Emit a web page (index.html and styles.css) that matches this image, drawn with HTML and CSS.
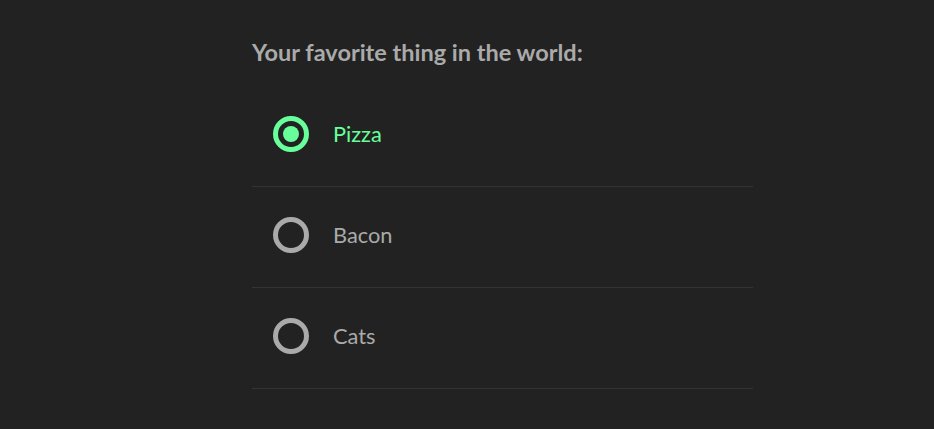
FILE: index.html
```html
<!DOCTYPE html>
<html lang="en">
<head>
<meta charset="utf-8">
<title>Favorite thing</title>
<link rel="stylesheet" href="styles.css">
</head>
<body>
<main class="page">
  <form class="poll">
    <h2 class="poll-title">Your favorite thing in the world:</h2>
    <ul class="options">
      <li class="option is-checked">
        <span class="radio"><span class="dot"></span></span>
        <span class="label">Pizza</span>
      </li>
      <li class="option">
        <span class="radio"></span>
        <span class="label">Bacon</span>
      </li>
      <li class="option">
        <span class="radio"></span>
        <span class="label">Cats</span>
      </li>
    </ul>
  </form>
</main>
</body>
</html>
```

FILE: styles.css
```css
html, body {
  margin: 0;
  padding: 0;
  background: #222222;
  height: 100%;
}

body {
  font-family: Lato, "Liberation Sans", sans-serif;
  color: #aaaaaa;
}

.page {
  padding: 36px 0 0 252px;
}

.poll {
  width: 501px;
}

.poll-title {
  margin: 0 0 18px 0;
  font-size: 23.5px;
  font-weight: 700;
  line-height: 32px;
  color: #aaaaaa;
}

.options {
  list-style: none;
  margin: 0;
  padding: 0;
}

.option {
  display: flex;
  align-items: center;
  gap: 24px;
  padding: 30px 0 34px 21px;
  border-bottom: 1px solid #333333;
}

.radio {
  box-sizing: border-box;
  width: 36px;
  height: 36px;
  border: 5px solid #aaaaaa;
  border-radius: 50%;
  display: flex;
  align-items: center;
  justify-content: center;
  flex: none;
}

.dot {
  width: 16px;
  height: 16px;
  border-radius: 50%;
  background: #66ff99;
}

.is-checked .radio {
  border-color: #66ff99;
}

.label {
  font-size: 21.8px;
  line-height: 36px;
  color: #aaaaaa;
}

.is-checked .label {
  color: #66ff99;
}
```
